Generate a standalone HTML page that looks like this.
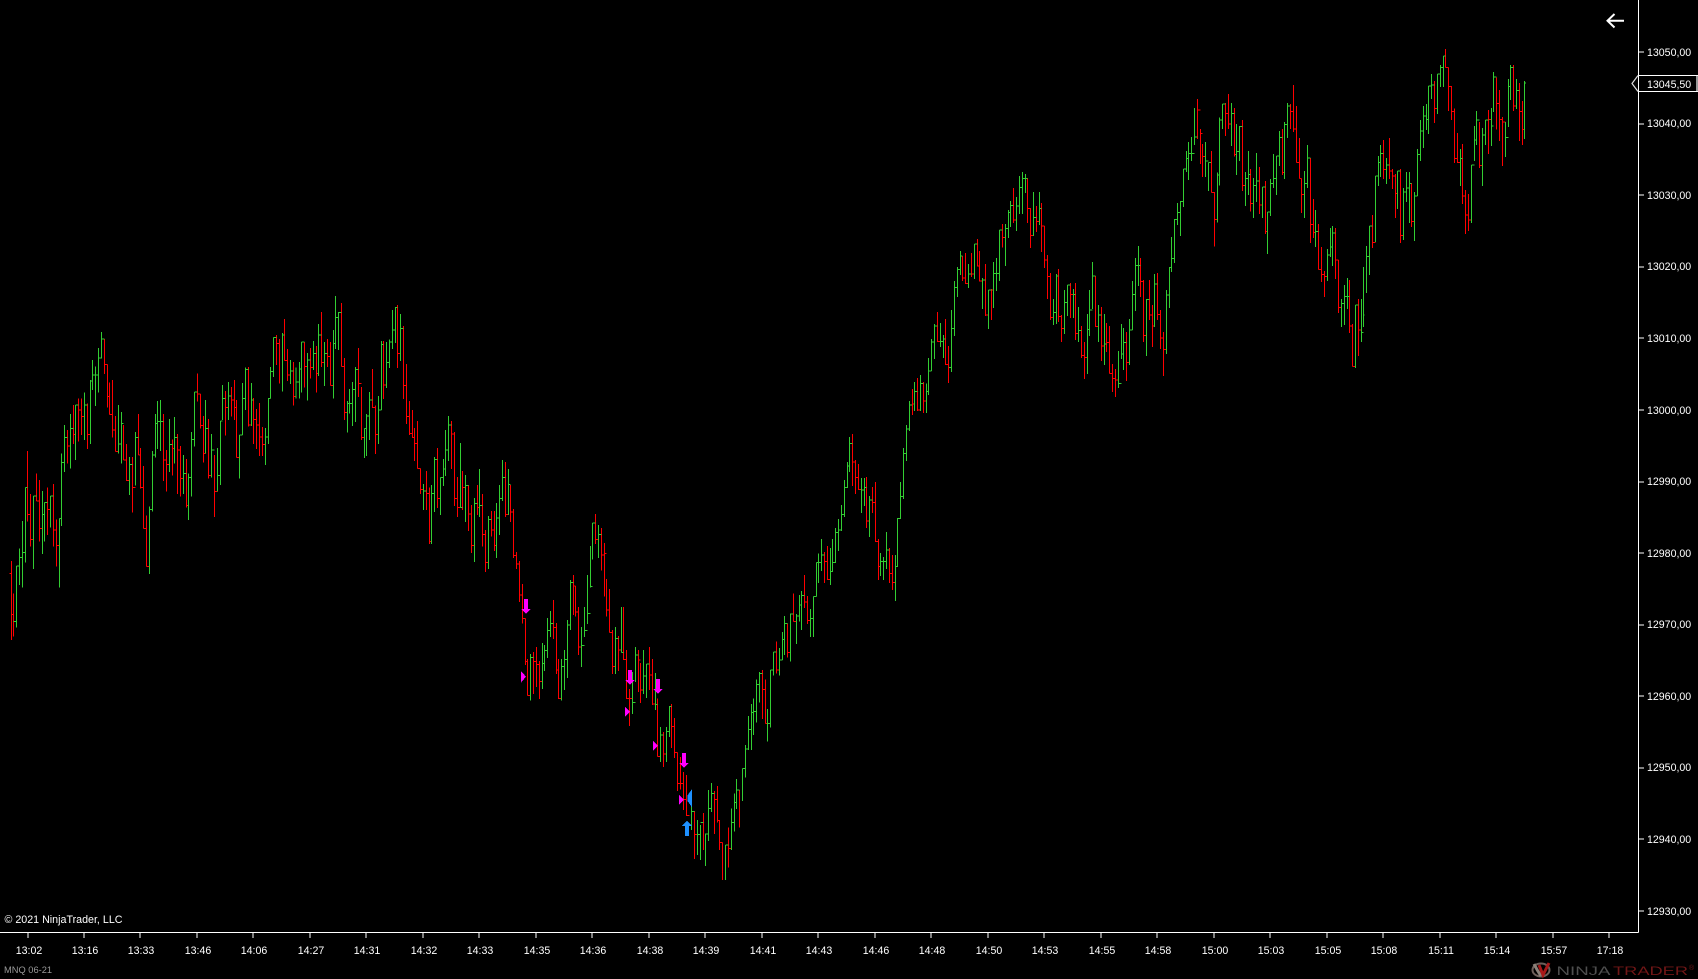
<!DOCTYPE html>
<html><head><meta charset="utf-8"><title>MNQ 06-21</title>
<style>
html,body{margin:0;padding:0;background:#000;width:1698px;height:979px;overflow:hidden}
svg{display:block}
text{font-family:"Liberation Sans",Arial,sans-serif;fill:#fff;font-size:10.6px}
.r{stroke:#ff0000}.g{stroke:#32cd32}
path{fill:none;stroke-width:3;shape-rendering:crispEdges}
</style></head><body>
<svg width="1698" height="979" viewBox="0 0 1698 979" xmlns="http://www.w3.org/2000/svg">
<rect width="1698" height="979" fill="#000"/>

<g transform="translate(0,320) scale(.33333)">
<path class="r" d="M34 723V960M28 760h6M34 883h7M41 820V950M83 393V605M83 583h8M91 522V680M91 658h9M109 460V543M109 543h9M118 480V665M118 625h9M142 502V645M142 568h9M160 492V680M160 630h9M169 598V740M169 676h9M202 330V430M202 378h9M220 255V372M220 343h7M236 235V365M236 270h8M244 235V345M244 289h9M262 250V387M262 343h9M313 57V162M313 133h10M323 133V263M323 229h6M329 187V283M329 283h9M338 180V352M338 330h9M347 288V395M347 395h8M370 315V420M370 420h10M380 372V483M380 482h9M398 411V578M398 502h9M416 282V405M416 405h6M422 384V505M422 502h9M431 438V625M431 625h9M440 587V740M440 740h9M490 282V483M490 420h9M499 390V515M499 433h9M517 358V467M517 385h7M533 342V522M533 390h9M542 378V530M542 475h8M560 417V563M560 557h6M592 160V245M592 222h9M601 222V326M601 316h10M611 288V428M611 400h6M626 297V476M626 466h8M644 405V591M644 514h9M676 213V347M676 262h9M695 201V290M695 240h9M704 180V300M704 262h6M710 240V412M710 412h9M745 141V320M745 315h10M760 234V372M760 298h10M770 267V387M770 315h9M779 249V408M779 351h9M788 321V408M788 373h9M829 45V135M829 70h9M838 57V190"/>
<path class="g" d="M50 738V923M41 904h9M50 738h9M59 685V795M59 712h9M68 603V803M68 697h9M77 502V728M77 502h6M100 528V747M100 528h9M127 513V702M127 583h7M134 547V665M134 547h8M151 528V623M151 528h9M178 595V803M178 595h7M185 400V618M185 427h9M194 315V456M194 352h8M211 282V446M211 325h9M227 255V420M227 255h9M253 217V360M253 255h9M271 180V372M271 183h7M278 120V210M278 165h8M286 140V258M286 165h10M296 84V218M296 114h9M305 36V115M305 57h8M355 255V400M355 372h10M365 276V430M365 310h5M389 411V525M389 433h9M407 336V497M407 352h9M449 560V762M449 568h9M458 393V575M458 405h9M467 282V413M467 310h6M473 243V387M473 304h8M481 240V393M481 304h9M508 297V456M508 373h9M524 291V430M524 352h9M550 405V522M550 460h10M566 460V600M566 472h9M575 336V530M575 358h9M584 216V380M584 216h8M617 240V400M617 325h9M634 342V473M634 390h10M653 384V515M653 466h9M662 303V495M662 303h6M668 195V300M668 235h8M685 186V300M685 228h10M719 345V476M719 345h9M728 189V345M728 235h9M737 142V270M737 148h8M755 189V318M755 240h5M797 324V435M797 351h9M806 234V372M806 235h6M812 141V235M812 154h9M821 52V171M821 52h8"/>
</g>

<g transform="translate(280,280) scale(.33333)">
<path class="r" d="M13 117V242M13 242h9M22 207V303M22 285h9M40 246V377M40 350h8M73 186V323M73 260h9M91 204V296M91 262h9M109 198V338M109 280h6M124 96V261M124 247h9M142 177V261M142 230h9M151 186V317M151 316h9M184 69V260M184 259h9M193 234V420M193 397h9M236 204V351M236 310h9M245 321V480M245 472h9M278 267V384M278 382h9M287 376V522M287 463h9M311 183V357M311 315h9M353 75V264M353 220h8M370 138V357M370 316h9M379 252V432M379 410h9M388 363V465M388 460h9M397 390V474M397 472h7M404 444V543M404 490h8M412 423V566M412 565h9M421 565V642M421 628h10M439 573V690M439 640h9M448 622V792M448 785h6M472 504V684M472 655h9M514 423V567M514 462h9M523 456V678M523 655h9M532 591V711M532 682h9M547 573V690M547 623h9M565 615V753M565 702h9M574 675V819M574 796h9M592 615V705M592 682h6M607 642V800M607 763h9M616 750V876M616 847h9M634 693V770M634 750h9M643 693V813M643 796h6M676 546V711M676 703h9M691 615V726M691 696h9M700 687V834M700 826h9M709 816V867M709 852h9M718 843V966M718 945h9"/>
<path class="g" d="M7 159V335M7 165h6M31 240V312M31 273h9M48 262V356M48 306h10M58 246V356M58 267h7M65 186V338M65 186h8M82 219V362M82 240h9M100 183V270M100 220h9M115 132V288M115 165h9M133 186V318M133 220h9M160 150V356M160 190h7M167 48V207M167 112h8M175 96V210M175 97h9M202 363V458M202 370h7M209 327V400M209 370h9M218 306V438M218 328h9M227 261V426M227 268h9M254 445V534M254 445h6M260 402V528M260 408h9M269 336V480M269 360h9M296 348V492M296 390h8M304 183V390M304 193h7M320 186V324M320 247h9M329 178V264M329 186h9M338 90V207M338 150h9M347 81V189M347 83h6M361 102V243M361 145h9M431 612V690M431 633h8M454 615V792M454 640h9M463 531V696M463 538h9M481 592V705M481 592h9M490 537V618M490 567h6M496 450V588M496 510h9M505 408V543M505 435h9M541 489V682M541 682h6M556 585V726M556 616h9M583 654V846M583 670h9M598 567V711M598 676h9M625 708V867M625 718h9M649 669V834M649 714h9M658 615V765M658 655h9M667 540V663M667 592h9M685 567V705M685 613h6"/>
</g>

<g transform="translate(500,580) scale(.33333)">
<path class="r" d="M67 12V131M67 115h9M76 115V255M76 245h6M82 237V347M82 347h9M100 216V342M100 244h9M109 201V321M109 253h9M118 243V357M118 304h9M160 60V177M160 142h9M169 129V282M169 270h6M175 237V357M175 355h9M220 -15V105M220 18h6M226 18V110M226 96h9M235 81V225M235 201h9M286 -198V-108M286 -122h9M304 -156V-28M304 -75h9M313 -111V50M313 -80h6M319 -3V110M319 90h9M328 27V158M328 157h9M337 150V282M337 260h9M355 168V273M355 210h9M370 81V240M370 238h9M379 210V357M379 355h9M388 327V438M388 355h9M415 210V336M415 240h6M421 249V369M421 330h9M448 201V330M448 285h9M457 237V375M457 372h9M472 355V530M472 529h9M490 456V561M490 522h9M514 372V504M514 440h9M523 414V534M523 517h9M532 517V633M532 610h9M541 531V628M541 610h9M550 576V690M550 658h9M559 585V708M559 706h9M583 693V837M583 763h9M610 699V810M643 633V762M643 658h9M652 618V727M652 722h7M659 720V810M659 787h9"/>
<path class="g" d="M91 222V362M91 232h9M127 189V327M127 250h6M133 195V273M133 211h9M142 114V234M142 151h9M151 93V171M151 130h9M184 237V362M184 259h9M193 210V330M193 238h9M202 120V294M202 135h9M211 0V150M211 8h9M244 141V261M244 196h9M253 81V171M253 151h9M262 -15V132M262 100h9M271 -102V23M271 20h6M277 -171V-62M277 -171h9M295 -165V-66M295 -137h9M346 141V282M346 175h9M364 81V218M364 217h6M397 276V402M397 367h9M406 201V306M406 225h9M430 210V342M430 288h9M439 252V354M439 252h9M466 279V390M466 374h6M481 441V546M481 465h9M499 441V546M499 455h9M508 378V471M508 380h6M574 680V750M574 695h9M592 720V825M592 763h9M601 735V840M601 727h9M616 760V858M616 762h9M625 630V783M625 685h9M634 609V696M634 640h9"/>
</g>

<g transform="translate(720,400) scale(.33333)">
<path class="r" d="M7 1327V1440M0 1327h7M25 1282V1403M25 1345h9M58 1170V1283M49 1170h9M127 810V957M127 868h9M136 838V970M136 970h6M169 724V820M169 810h9M202 670V773M193 670h9M202 757h9M220 580V665M220 665h9M253 525V624M253 606h9M262 588V672M262 662h9M313 456V549M313 484h9M322 438V540M322 538h9M397 102V258M397 186h9M406 180V282M406 232h9M415 192V270M415 268h9M439 231V384M439 363h9M457 261V339M457 307h9M466 246V426M466 424h9M475 417V540M475 500h6M508 444V549M508 520h9M517 465V570M517 547h9"/>
<path class="g" d="M16 1335V1440M16 1335h9M34 1225V1350M34 1267h9M43 1180V1295M43 1207h6M49 1137V1227M49 1170h9M67 1105V1203M67 1105h9M76 1035V1133M76 1047h9M85 948V1050M85 988h9M94 912V1050M94 938h6M100 895V1005M100 935h9M109 838V968M109 853h9M118 816V908M118 820h9M142 927V1025M142 970h9M151 810V983M151 810h9M160 756V827M160 756h9M178 744V827M178 780h9M187 696V780M187 718h6M193 648V765M193 670h9M211 640V785M211 642h9M229 642V732M229 648h9M238 585V665M238 615h6M244 573V690M244 586h9M271 627V711M271 655h9M280 589V711M280 589h9M289 487V590M289 487h6M295 460V549M295 487h9M304 417V513M304 465h9M331 444V555M331 514h6M337 417V516M337 487h9M346 384V489M346 397h9M355 357V453M355 390h9M364 315V393M364 343h9M373 240V351M373 262h9M382 186V264M382 198h6M388 111V216M388 130h9M424 234V339M424 270h9M433 234V318M433 262h6M448 288V411M448 300h9M481 459V528M481 484h9M490 471V540M490 484h9M499 396V507M499 450h9M526 465V603M526 499h6M532 354V501M532 355h9M541 246V357M541 290h9M550 144V297M550 160h9M559 75V183M559 87h9M568 3V93M568 15h9"/>
</g>

<g transform="translate(890,300) scale(.33333)">
<path class="r" d="M67 267V345M67 312h6M82 234V333M82 330h9M100 246V339M100 303h9M142 36V126M142 124h9M166 57V195M166 193h9M175 138V249M175 202h9"/>
<path class="g" d="M73 246V333M73 274h9M91 225V333M91 250h9M109 250V339M109 275h6M115 174V285M115 213h9M124 117V213M124 126h9M133 72V177M133 78h9M151 69V141M151 124h9M160 105V174M160 117h6"/>
</g>

<g transform="translate(950,160) scale(.33333)">
<path class="r" d="M37 288V363M37 354h9M46 279V372M46 370h9M64 279V351M64 342h9M82 237V320M82 318h6M88 273V365M88 363h9M106 312V468M106 465h9M124 387V480M124 390h6M157 192V262M157 232h9M190 84V189M190 180h9M232 54V189M232 145h9M241 144V264M241 226h9M259 138V216M259 184h9M274 129V276M274 198h9M283 198V324M283 300h9M292 285V417M292 350h9M301 339V480M301 472h9M325 327V486M325 470h9M334 465V546M334 505h9M361 369V474M361 403h9M376 369V540M376 520h9M394 498V594M394 586h9M403 546V657M403 592h9M436 348V501M436 499h9M454 441V603M454 558h9M469 489V576M469 547h9M478 498V640M478 640h9M487 612V696M487 655h9M496 627V711M496 660h9M529 516V663M529 607h9M571 294V411M571 364h9M580 360V546M580 526h9M598 360V480M598 465h9M607 435V561M607 498h6M622 339V480M622 463h9M631 450V567M631 534h9M640 516V648M640 568h9M742 -183V-63M742 -150h9M751 -93V12M751 -80h6M757 -48V51M757 -11h9"/>
<path class="g" d="M4 450V636M-3 622h7M4 505h9M13 363V528M13 382h9M22 321V411M22 328h9M31 273V345M31 288h6M55 312V384M55 342h9M73 252V357M73 252h9M97 354V447M97 360h9M115 390V507M115 390h9M130 306V444M130 340h9M139 294V393M139 340h9M148 210V363M148 210h9M166 192V318M166 205h9M175 150V234M175 158h6M181 123V201M181 136h9M199 111V213M199 138h9M208 48V162M208 82h9M217 36V162M217 55h9M226 42V99M226 55h6M250 96V228M250 172h9M268 96V195M268 145h6M310 417V495M310 457h9M319 342V492M319 348h6M343 390V522M343 427h9M352 375V468M352 375h9M370 387V474M370 403h6M385 441V546M385 512h9M412 462V642M412 508h6M418 390V528M418 450h9M427 306V447M427 348h9M445 435V546M445 465h9M463 462V615M463 552h6M505 573V684M505 670h9M514 492V597M514 582h6M520 504V630M520 547h9M538 477V615M538 510h9M547 363V510M547 403h9M556 294V453M556 316h9M565 258V378M565 316h6M589 417V588M589 418h9M613 342V501M613 372h9M649 390V582M649 405h9M658 321V444M658 322h6M664 231V336M664 295h9M673 177V309M673 178h9M682 129V195M682 157h9M691 123V228M691 124h9M700 27V141M700 27h9M709 -27V36M709 -5h6M715 -54V60M715 -20h9M724 -69V3M724 -20h9M733 -156V-45M733 -69h9M766 -54V51M766 3h9M775 7V93M775 7h9"/>
</g>

<g transform="translate(1200,40) scale(.33333)">
<path class="r" d="M34 333V457M34 457h9M43 456V620M43 538h9M76 189V288M76 220h9M85 162V267M85 252h9M103 204V350M103 343h6M127 240V453M127 436h9M151 387V514M151 490h9M178 381V522M178 495h9M196 423V582M196 575h6M247 267V405M247 397h6M271 192V267M271 214h9M280 135V276M280 267h9M289 198V368M289 367h9M298 294V415M298 415h6M304 415V519M304 463h9M331 354V609M331 553h9M340 477V594M340 577h7M356 552V688M356 688h9M365 621V726M365 703h9M374 693V771M374 709h8M406 564V717M406 660h9M415 660V819M415 802h9M448 720V879M448 858h9M457 852V979M457 979h9M475 777V948M475 870h9M517 525V624M517 607h9M550 300V417M550 388h9M568 294V417M568 393h9M577 387V447M577 408h9M586 402V534M586 460h6M601 387V609M601 586h9M634 429V561M634 544h9M703 123V249M703 205h9M736 27V82M736 82h9M745 82V213M745 140h9M754 138V240M754 214h9M763 205V369M763 355h9M772 279V369M772 367h9M787 312V492M787 468h9M796 450V582M796 525h9M805 462V573M805 540h9M838 246V384M838 377h9M865 210V342M865 238h9M889 112V269M889 190h9M898 150V303M898 238h9M907 231V378M907 246h9M940 75V213M940 198h9M958 129V303M958 214h9M967 183V315M967 268h6"/>
<path class="g" d="M52 397V548M52 405h6M58 232V437M58 240h9M67 192V267M67 192h9M94 189V318M94 220h9M109 252V405M109 334h9M118 258V363M118 260h9M136 396V498M136 415h9M145 333V465M145 403h6M160 414V534M160 436h9M169 339V486M169 423h9M187 441V534M187 441h9M202 516V642M202 516h9M211 417V528M211 430h9M220 342V444M220 415h9M229 348V465M229 348h9M238 273V378M238 292h9M253 246V417M253 253h9M262 189V294M262 198h9M313 393V534M313 430h9M322 315V444M322 354h9M347 510V621M347 574h9M382 627V723M382 645h9M391 564V651M391 621h6M397 558V678M397 579h9M424 777V861M424 790h9M433 735V855M433 769h9M442 714V807M442 769h6M466 795V984M466 795h9M484 777V906M484 877h6M490 681V861M490 825h4M499 618V759M499 649h9M508 558V705M508 558h9M526 408V606M526 408h9M535 348V438M535 367h6M541 315V411M541 340h9M559 354V432M559 375h9M592 393V507M592 393h9M610 444V600M610 456h9M619 396V486M619 444h9M628 396V549M628 430h6M643 456V603M643 468h9M652 327V468M652 343h9M661 240V363M661 273h9M670 198V324M670 228h9M679 192V270M679 238h6M685 138V282M685 138h9M694 102V177M694 135h9M712 102V222M712 102h9M721 75V141M721 82h9M730 48V141M730 48h6M781 327V438M781 355h6M814 375V549M814 375h9M823 258V363M823 300h6M829 213V315M829 240h9M847 264V438M847 285h9M856 240V315M856 240h9M874 204V318M874 258h6M880 96V216M880 111h9M916 246V351M916 292h9M925 117V261M925 140h6M931 75V180M931 82h9M949 117V207M949 151h9M973 123V297M973 129h5"/>
</g>

<!-- markers -->
<g transform="translate(500,580) scale(.33333)">
<path style="fill:#ff00ff;stroke:none;shape-rendering:crispEdges" d="M72 57h12v30h9l-15 15-15-15h9zM384 270h12v30h9l-15 15-15-15h9zM468 297h12v30h9l-15 15-15-15h9zM546 519h12v30h9l-15 15-15-15h9zM63 273l15 17-15 18zM375 381l15 15-15 15zM459 483l15 15-15 15zM537 645l15 15-15 15z"/>
<path style="fill:#1e90ff;stroke:none;shape-rendering:crispEdges" d="M576 627v55l-14-20v-15zM561 723l15 15h-9v30h-12v-30h-9z"/>
</g>

<!-- axes -->
<path d="M1638.5 0V932.5M0 932.5H1638.5" stroke="#fff" style="stroke-width:1"/>
<path style="stroke-width:1" stroke="#fff" d="M1639 52h5M1639 124h5M1639 195h5M1639 267h5M1639 338h5M1639 410h5M1639 482h5M1639 553h5M1639 625h5M1639 696h5M1639 768h5M1639 839h5M1639 911h5M28 933v5M84 933v5M140 933v5M197 933v5M253 933v5M310 933v5M366 933v5M423 933v5M479 933v5M536 933v5M592 933v5M649 933v5M705 933v5M762 933v5M818 933v5M875 933v5M931 933v5M988 933v5M1044 933v5M1101 933v5M1157 933v5M1214 933v5M1270 933v5M1327 933v5M1383 933v5M1440 933v5M1496 933v5M1553 933v5M1609 933v5"/>

<g>
<text x="1647" y="56">13050,00</text>
<text x="1647" y="127">13040,00</text>
<text x="1647" y="199">13030,00</text>
<text x="1647" y="270">13020,00</text>
<text x="1647" y="342">13010,00</text>
<text x="1647" y="414">13000,00</text>
<text x="1647" y="485">12990,00</text>
<text x="1647" y="557">12980,00</text>
<text x="1647" y="628">12970,00</text>
<text x="1647" y="700">12960,00</text>
<text x="1647" y="771">12950,00</text>
<text x="1647" y="843">12940,00</text>
<text x="1647" y="915">12930,00</text>
</g>

<!-- current price marker -->
<rect x="1639" y="76" width="59" height="15" fill="#000"/>
<path d="M1638 75.5H1698M1638 91.5H1698" stroke="#fff" style="stroke-width:1;shape-rendering:crispEdges"/>
<path d="M1638 75.5L1632 83.5L1638 91.5" stroke="#ddd" style="stroke-width:1.2;shape-rendering:auto"/>
<rect x="1696" y="76" width="2" height="15" fill="#999"/>
<text x="1647" y="88">13045,50</text>

<!-- time labels -->
<g text-anchor="middle" transform="translate(1,0)">
<text x="28" y="954">13:02</text><text x="84" y="954">13:16</text><text x="140" y="954">13:33</text><text x="197" y="954">13:46</text><text x="253" y="954">14:06</text><text x="310" y="954">14:27</text><text x="366" y="954">14:31</text><text x="423" y="954">14:32</text><text x="479" y="954">14:33</text><text x="536" y="954">14:35</text><text x="592" y="954">14:36</text><text x="649" y="954">14:38</text><text x="705" y="954">14:39</text><text x="762" y="954">14:41</text><text x="818" y="954">14:43</text><text x="875" y="954">14:46</text><text x="931" y="954">14:48</text><text x="988" y="954">14:50</text><text x="1044" y="954">14:53</text><text x="1101" y="954">14:55</text><text x="1157" y="954">14:58</text><text x="1214" y="954">15:00</text><text x="1270" y="954">15:03</text><text x="1327" y="954">15:05</text><text x="1383" y="954">15:08</text><text x="1440" y="954">15:11</text><text x="1496" y="954">15:14</text><text x="1553" y="954">15:57</text><text x="1609" y="954">17:18</text>
</g>

<text x="4.5" y="923" style="font-size:10.7px">© 2021 NinjaTrader, LLC</text>
<text x="4" y="973" style="font-size:9.3px;fill:#999">MNQ 06-21</text>

<!-- back arrow -->
<path d="M1624 20.7H1607.5M1614.5 14L1607.5 20.7L1614.5 27.5" stroke="#fff" style="stroke-width:2;shape-rendering:auto"/>

<!-- logo -->
<g style="shape-rendering:auto">
<ellipse cx="1541" cy="970" rx="8.5" ry="6.5" stroke="#6d5f5a" style="stroke-width:2;shape-rendering:auto"/>
<path d="M1534 964Q1537 970 1541 976" stroke="#8a8078" style="stroke-width:3;shape-rendering:auto"/>
<path d="M1539 965L1543 975L1549 963" stroke="#a81818" style="stroke-width:3;shape-rendering:auto"/>
<text x="1556.5" y="975" textLength="54" lengthAdjust="spacingAndGlyphs" style="font-size:12px;fill:#4e4e4e">NINJA</text>
<text x="1613" y="975" textLength="75" lengthAdjust="spacingAndGlyphs" style="font-size:12px;fill:#701616">TRADER</text>
<text x="1689" y="970" style="font-size:7px;fill:#701616">®</text>
</g>
</svg>
</body></html>
